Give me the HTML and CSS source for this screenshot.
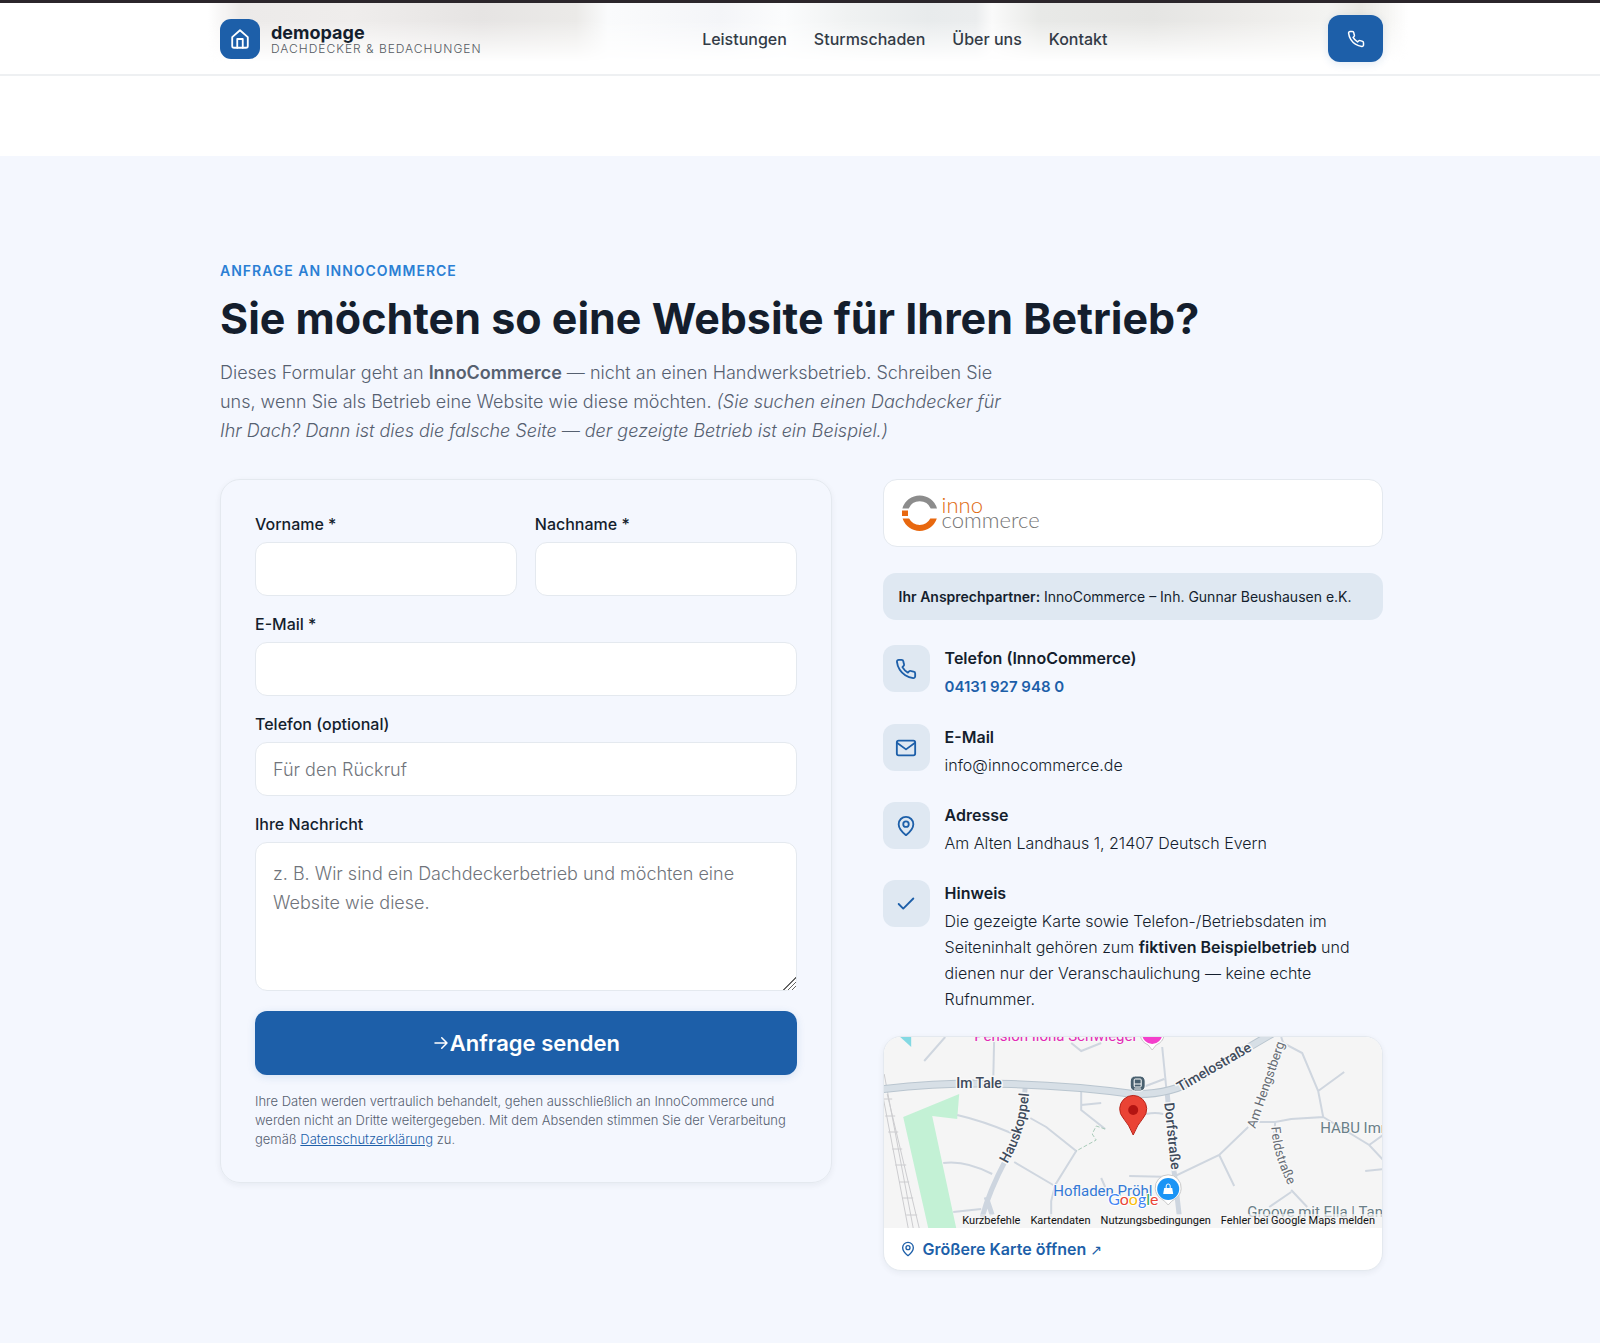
FILE: index.html
```html
<!DOCTYPE html>
<html lang="de">
<head>
<meta charset="utf-8">
<meta name="viewport" content="width=device-width, initial-scale=1">
<title>demopage – Dachdecker &amp; Bedachungen</title>
<link rel="stylesheet" href="styles.css">
</head>
<body>
<header class="site-header">
  <div class="container header-row">
    <a class="brand" href="#">
      <span class="brand-mark">
        <svg class="icon" viewBox="0 0 24 24" width="22" height="22"><path d="M3.5 10 12 2.5 20.5 10v9.5a2 2 0 0 1-2 2h-13a2 2 0 0 1-2-2z"/><path d="M9 21.500V12h6v9.500"/></svg>
      </span>
      <span class="brand-text">
        <span class="brand-name">demopage</span>
        <span class="brand-sub">DACHDECKER &amp; BEDACHUNGEN</span>
      </span>
    </a>
    <nav class="main-nav">
      <a href="#leistungen">Leistungen</a>
      <a href="#sturmschaden">Sturmschaden</a>
      <a href="#ueber-uns">Über uns</a>
      <a href="#kontakt">Kontakt</a>
    </nav>
    <a class="call-button" href="tel:+4941319279480" aria-label="Anrufen">
      <svg class="icon" viewBox="0 0 24 24" width="18" height="18"><path d="M22 16.920v3a2 2 0 0 1-2.180 2 19.790 19.790 0 0 1-8.630-3.070 19.500 19.500 0 0 1-6-6 19.790 19.790 0 0 1-3.070-8.670A2 2 0 0 1 4.110 2h3a2 2 0 0 1 2 1.720c.127.960.361 1.903.7 2.810a2 2 0 0 1-.450 2.110L8.090 9.910a16 16 0 0 0 6 6l1.270-1.270a2 2 0 0 1 2.110-.450c.907.339 1.850.573 2.810.7A2 2 0 0 1 22 16.920z"/></svg>
    </a>
  </div>
</header>

<main>
<section class="contact" id="kontakt">
  <div class="container">
    <p class="eyebrow">ANFRAGE AN INNOCOMMERCE</p>
    <h1>Sie möchten so eine Website für Ihren Betrieb?</h1>
    <p class="lead">Dieses Formular geht an <strong>InnoCommerce</strong> — nicht an einen Handwerksbetrieb. Schreiben Sie uns, wenn Sie als Betrieb eine Website wie diese möchten. <em>(Sie suchen einen Dachdecker für Ihr Dach? Dann ist dies die falsche Seite — der gezeigte Betrieb ist ein Beispiel.)</em></p>

    <div class="contact-grid">
      <form class="form-card">
        <div class="field-pair">
          <div class="field"><label for="vorname">Vorname *</label><input id="vorname" type="text"></div>
          <div class="field"><label for="nachname">Nachname *</label><input id="nachname" type="text"></div>
        </div>
        <div class="field"><label for="email">E-Mail *</label><input id="email" type="email"></div>
        <div class="field"><label for="telefon">Telefon (optional)</label><input id="telefon" type="tel" placeholder="Für den Rückruf"></div>
        <div class="field"><label for="nachricht">Ihre Nachricht</label><textarea id="nachricht" placeholder="z. B. Wir sind ein Dachdeckerbetrieb und möchten eine Website wie diese."></textarea></div>
        <button class="submit" type="submit">
          <svg class="icon" viewBox="0 0 24 24" width="18" height="18"><path d="M4 12h16M13 5l7 7-7 7"/></svg>Anfrage senden
        </button>
        <p class="privacy">Ihre Daten werden vertraulich behandelt, gehen ausschließlich an InnoCommerce und werden nicht an Dritte weitergegeben. Mit dem Absenden stimmen Sie der Verarbeitung gemäß <a href="#datenschutz">Datenschutzerklärung</a> zu.</p>
      </form>

      <aside class="info">
        <div class="logo-card">
          <svg viewBox="0 0 36 38" width="36" height="38" aria-hidden="true">
            <path d="M.4 14.500A18 18 0 0 1 35 14.500H28.700A12 12 0 0 0 6.700 14.500z" fill="#8c8c8c"/>
            <path d="M.6 24.500A18 18 0 0 0 34.800 24.500H28.300A12 12 0 0 1 7.100 24.500z" fill="#e8680f"/>
            <path d="M0 16.500h6v5.500H0z" fill="#e8680f"/>
          </svg>
          <span class="logo-words"><span class="logo-inno">inno</span><span>commerce</span></span>
        </div>
        <p class="partner"><strong>Ihr Ansprechpartner:</strong> InnoCommerce – Inh. Gunnar Beushausen e.K.</p>
        <ul class="facts">
          <li>
            <span class="tile"><svg class="icon" viewBox="0 0 24 24" width="22" height="22"><path d="M22 16.920v3a2 2 0 0 1-2.180 2 19.790 19.790 0 0 1-8.630-3.070 19.500 19.500 0 0 1-6-6 19.790 19.790 0 0 1-3.070-8.670A2 2 0 0 1 4.110 2h3a2 2 0 0 1 2 1.720c.127.960.361 1.903.7 2.810a2 2 0 0 1-.450 2.110L8.090 9.910a16 16 0 0 0 6 6l1.270-1.270a2 2 0 0 1 2.110-.450c.907.339 1.850.573 2.810.7A2 2 0 0 1 22 16.920z"/></svg></span>
            <div><h2>Telefon (InnoCommerce)</h2><a class="phone" href="tel:+4941319279480">04131 927 948 0</a></div>
          </li>
          <li>
            <span class="tile"><svg class="icon" viewBox="0 0 24 24" width="22" height="22"><rect x="2" y="4" width="20" height="16" rx="2"/><path d="m2.500 6.500 9.500 7 9.500-7"/></svg></span>
            <div><h2>E-Mail</h2><a href="mailto:info@innocommerce.de">info@innocommerce.de</a></div>
          </li>
          <li>
            <span class="tile"><svg class="icon" viewBox="0 0 24 24" width="22" height="22"><path d="M20 10c0 5-5.500 10-8 12-2.500-2-8-7-8-12a8 8 0 0 1 16 0z"/><circle cx="12" cy="10" r="3"/></svg></span>
            <div><h2>Adresse</h2><p>Am Alten Landhaus 1, 21407 Deutsch Evern</p></div>
          </li>
          <li>
            <span class="tile"><svg class="icon" viewBox="0 0 24 24" width="22" height="22"><path d="M20 6 9 17l-5-5"/></svg></span>
            <div><h2>Hinweis</h2><p>Die gezeigte Karte sowie Telefon-/Betriebsdaten im Seiteninhalt gehören zum <strong>fiktiven Beispielbetrieb</strong> und dienen nur der Veranschaulichung — keine echte Rufnummer.</p></div>
          </li>
        </ul>
        <div class="map-card">
          <div class="map">
            <svg class="map-drawing" viewBox="0 0 500 191" preserveAspectRatio="xMidYMid slice" role="img" aria-label="Karte">
              <defs>
                <path id="hauskoppel" d="M124 127Q143 95 146 55"/>
                <path id="feldstrasse" d="M388 90Q390 122 408 153"/>
              </defs>
              <path d="M17 0h11v10z" fill="#83d9e3"/>
              <path d="M20 80 76 57 74 82 49 79 73 191H45z" fill="#c3f1d5"/>
              <g class="rail"><path d="M1 37 30 191M4 57 36 191M-3 45 25 191"/><path d="M0 62h9M2 79h10M5 95h10M9 112h10M12 128h11M16 145h10M19 161h11M23 178h11"/></g>
              <g class="lanes">
                <path d="M41 24 62 0M111 0 110 45M188 6 198 14 218 6M198 54V73L222 92M198 68 218 66M74 78Q100 84 128 96M147 81 163 90 193 114 172 148 168 164V180M131 125 170 148M60 126Q82 123 109 137M70 175 98 172M246 139 290 140 336 118 365 90M336 118 351 149M218 141 222 150M279 10 283 50M260 50 281 42M263 77Q272 75 280 77M376 85 392 85 408 82 440 80 435 54 419 16 400 6 398 0M435 54 461 35M440 80 486 108 500 123M486 108 500 98M482 134 500 132M392 85 391 96M408 153 424 170M408 155 386 170"/>
              </g>
              <path d="M222 92 213 89 209 97 213 103 193 114" fill="none" stroke="#a9cbb9" stroke-dasharray="4 2"/>
              <g fill="none" stroke-linecap="butt">
                <path d="M142 50Q140 90 123 122T99 180M103 160 109 178" stroke="#cdd5df" stroke-width="5"/>
                <path d="M284 56 291 135 296 178" stroke="#cdd5df" stroke-width="5"/>
                <path d="M0 52Q62 45 128 47T250 57Q288 58 315 41T390-4" stroke="#b9c5cf" stroke-width="8"/>
                <path d="M0 52Q62 45 128 47T250 57Q288 58 315 41T390-4" stroke="#d7dfe6" stroke-width="6"/>
              </g>
              <g class="labels">
                <text x="73" y="51">Im Tale</text>
                <text transform="translate(297 55) rotate(-30)">Timelostraße</text>
                <text transform="translate(281 66) rotate(84)">Dorfstraße</text>
                <text><textPath href="#hauskoppel">Hauskoppel</textPath></text>
                <g class="minor"><text transform="translate(372 92) rotate(-71)">Am Hengstberg</text>
                <text><textPath href="#feldstrasse">Feldstraße</textPath></text></g>
              </g>
              <g class="places">
                <text x="91" y="4" fill="#e22bb5">Pension Ilona Schwieger</text>
                <text x="170" y="159" fill="#3279d6">Hofladen Pröhl</text>
                <text x="437" y="96">HABU Immobilien</text>
                <text x="364" y="180">Groove mit Ella | Tanz</text>
              </g>
              <path d="M257-2h24q-1 7-8 10l-4 5-4-5q-7-3-8-10z" fill="#fff" stroke="#c9c9c9"/><circle cx="269" cy="-3" r="10" fill="#f43fcb"/>
              <g><rect x="247" y="39" width="15" height="15" rx="5" fill="#49606f" stroke="#fff"/><rect x="251" y="42" width="7" height="8" rx="1" fill="none" stroke="#fff"/><path d="M251 47h7M251 52h7" stroke="#fff"/></g>
              <path d="M250 98Q246 88 240 81A13.500 13.500 0 1 1 260 81Q254 88 250 98z" fill="#ea4335" stroke="#b9241a"/><circle cx="250" cy="73" r="5" fill="#b31412"/>
              <path d="M285 168q-3-4-8-7a13 13 0 1 1 16 0q-5 3-8 7z" fill="#fff" stroke="#c9c9c9"/><circle cx="285" cy="152" r="11" fill="#1a94f5"/><path d="M281 151h8l1 6h-10z" fill="#fff"/><path d="M283 151v-2a2 2 0 0 1 4 0v2" fill="none" stroke="#fff"/>
              <text class="google" x="225" y="168"><tspan fill="#4285f4">G</tspan><tspan fill="#ea4335">o</tspan><tspan fill="#fbbc05">o</tspan><tspan fill="#4285f4">g</tspan><tspan fill="#34a853">l</tspan><tspan fill="#ea4335">e</tspan></text>
            </svg>
            <div class="map-links">
              <button type="button">Kurzbefehle</button>
              <button type="button">Kartendaten</button>
              <a href="#nutzung">Nutzungsbedingungen</a>
              <a href="#fehler">Fehler bei Google Maps melden</a>
            </div>
          </div>
          <a class="map-open" href="#karte"><svg class="icon" viewBox="0 0 24 24" width="16" height="16"><path d="M20 10c0 5-5.500 10-8 12-2.500-2-8-7-8-12a8 8 0 0 1 16 0z"/><circle cx="12" cy="10" r="3"/></svg><span>Größere Karte öffnen <span class="arrow">↗</span></span></a>
        </div>
      </aside>
    </div>
  </div>
</section>
</main>
</body>
</html>
```
FILE: styles.css
```css
:root {
  --ink: #141e2d;
  --muted: #566070;
  --blue: #1d5fa9;
  --tint: #dfe8f2;
  --line: #e4e9ef;
  --page: #f4f7fe;
}
* { box-sizing: border-box; }
body {
  margin: 0;
  background: var(--page);
  color: var(--ink);
  font-family: Inter, "Liberation Sans", sans-serif;
  font-size: 16px;
  line-height: 26px;
}
h1, h2, p, ul { margin: 0; padding: 0; }
a { color: inherit; text-decoration: none; }
strong { font-weight: 600; }
.container { max-width: 1200px; margin: 0 auto; padding: 0 17px 0 20px; }
.icon { fill: none; stroke: currentColor; stroke-width: 2; stroke-linecap: round; stroke-linejoin: round; flex: none; }

/* Header */
.site-header {
  position: sticky;
  top: 0;
  z-index: 1;
  background: #fff;
  border-top: 3px solid #2b262b;
  border-bottom: 2px solid #eef0f2;
}
.site-header::before {
  content: "";
  position: absolute;
  inset: 0 0 12px;
  z-index: -1;
  background: linear-gradient(90deg, transparent 13%, #eceae9 15%, #efedec 22%, #e6e4e3 30%, #ebeae8 36%, #fafbfc 38%, #f4f5f8 45%, #fbfcfd 49%, #f0f2f2 53%, #e8ebec 58%, #ebedee 61%, #fafafa 62%, #e8e9e7 65%, #e5e5e3 72%, #edecea 78%, #f3f3f1 83%, #e9e8e3 85%, transparent 88%);
  -webkit-mask-image: linear-gradient(#000 30%, transparent);
  mask-image: linear-gradient(#000 30%, transparent);
}
.header-row { display: flex; align-items: center; justify-content: space-between; height: 71px; }
.brand { display: flex; align-items: center; gap: 11px; }
.brand-mark { display: grid; place-items: center; width: 40px; height: 40px; border-radius: 11px; background: var(--blue); color: #fff; }
.brand-text { display: grid; padding-top: 2px; }
.brand-name { font-size: 18px; font-weight: 700; line-height: 18px; }
.brand-sub { font-size: 12px; font-weight: 300; line-height: 14px; letter-spacing: 1px; color: #555a62; }
.main-nav { display: flex; gap: 27px; font-weight: 500; color: #333b46; }
.call-button { display: grid; place-items: center; width: 55px; height: 47px; border-radius: 12px; background: var(--blue); color: #fff; box-shadow: 0 2px 8px #1d5fa922; }

/* Contact */
main { padding-top: 80px; background: #fff; }
.contact { padding: 105px 0 73px; background: var(--page); }
.eyebrow { font-size: 14px; line-height: 20px; font-weight: 600; letter-spacing: 1px; color: #2b7fd4; }
h1 { margin: 12px 0 15px; font-size: 43px; line-height: 50px; font-weight: 700; }
.lead { max-width: 790px; font-size: 18px; font-weight: 300; line-height: 29px; color: var(--muted); }
.contact-grid { display: grid; grid-template-columns: 11fr 9fr; gap: 51px; align-items: start; margin-top: 34px; }

.form-card {
  display: grid;
  gap: 15px;
  padding: 31px 34px 33px;
  border: 1px solid var(--line);
  border-radius: 20px;
  box-shadow: 0 2px 6px #1420300f;
}
.field-pair { display: grid; grid-template-columns: 1fr 1fr; gap: 18px; }
.field { display: grid; gap: 5px; }
label { font-weight: 500; }
input, textarea {
  display: block;
  width: 100%;
  height: 54px;
  padding: 0 17px;
  border: 1px solid var(--line);
  border-radius: 12px;
  background: #fff;
  color: var(--ink);
  font: 300 18px/29px Inter, "Liberation Sans", sans-serif;
}
textarea { height: 149px; padding: 16px 17px; resize: vertical; }
textarea::-webkit-resizer { background: linear-gradient(135deg, #fff 50%, transparent 50%), repeating-linear-gradient(135deg, #666 0 1px, #fff 1px 3px); }
::placeholder { color: #70747b; opacity: 1; }
.submit {
  display: flex;
  align-items: center;
  justify-content: center;
  height: 64px;
  margin-top: 5px;
  border: 0;
  border-radius: 12px;
  background: var(--blue);
  color: #fff;
  font: 600 22px/28px Inter, "Liberation Sans", sans-serif;
  box-shadow: 0 2px 8px #1d5fa922;
}
.privacy { margin-top: 2px; font-size: 13px; font-weight: 300; line-height: 19px; color: var(--muted); }
.privacy a { color: var(--blue); text-decoration: underline; }

.info { display: grid; }
.logo-card {
  display: flex;
  align-items: center;
  gap: 4px;
  height: 68px;
  padding: 0 18px;
  border: 1px solid var(--line);
  border-radius: 14px;
  background: #fff;
}
.logo-words { display: grid; padding-bottom: 3px; font: 300 22px/15px Lato, "Liberation Sans", sans-serif; color: #757575; }
.logo-inno { color: #e06a10; }
.partner { margin: 26px 0 25px; padding: 11px 16px 10px; border-radius: 13px; background: var(--tint); font-size: 14px; }
.facts { display: grid; gap: 24px; list-style: none; }
.facts li { display: flex; gap: 15px; }
.facts h2 { margin-bottom: 2px; font-size: 16px; font-weight: 600; line-height: 26px; }
.facts a, .facts p { font-weight: 300; }
.facts .phone { color: var(--blue); font-size: 15px; font-weight: 600; }
.tile { display: grid; place-items: center; flex: none; width: 47px; height: 47px; border-radius: 12px; background: var(--tint); color: var(--blue); }

/* Map */
.map-card { margin-top: 24px; overflow: hidden; border: 1px solid var(--line); border-radius: 18px; background: #fff; box-shadow: 0 2px 6px #1420300f; }
.map { position: relative; height: 191px; background: #f5f5f5; }
.map-drawing { display: block; width: 100%; height: 100%; font-family: Roboto, "Liberation Sans", sans-serif; }
.rail { fill: none; stroke: #cccccf; }
.lanes { fill: none; stroke: #cfd6df; stroke-width: 2; }
.labels { font-size: 14px; font-weight: 500; fill: #3f4b5c; stroke: #f8f8f8; stroke-width: 3; paint-order: stroke; }
.minor { font-size: 13px; font-weight: 400; fill: #666c74; }
.places { font-size: 15px; fill: #6a7f88; stroke: #f8f8f8; stroke-width: 2; paint-order: stroke; }
.google { font-family: Lato, sans-serif; font-size: 16px; stroke: #fff; stroke-width: 2; paint-order: stroke; }
.map-links { position: absolute; inset: auto 0 0; display: flex; justify-content: flex-end; gap: 10px; padding: 0 7px 0 0; background: linear-gradient(90deg, transparent 15%, #f5f5f5b0 25%); font: 11px/14px Roboto, sans-serif; color: #111; }
.map-links button { padding: 0; border: 0; background: none; font: inherit; color: inherit; }
.map-open { display: flex; align-items: center; gap: 7px; height: 42px; padding: 0 16px; color: var(--blue); font-weight: 600; }
.arrow { font-family: "DejaVu Sans", sans-serif; font-size: 14px; font-weight: 400; }

@media (max-width: 900px) {
  .contact-grid { grid-template-columns: 1fr; }
  .main-nav { display: none; }
}
```
